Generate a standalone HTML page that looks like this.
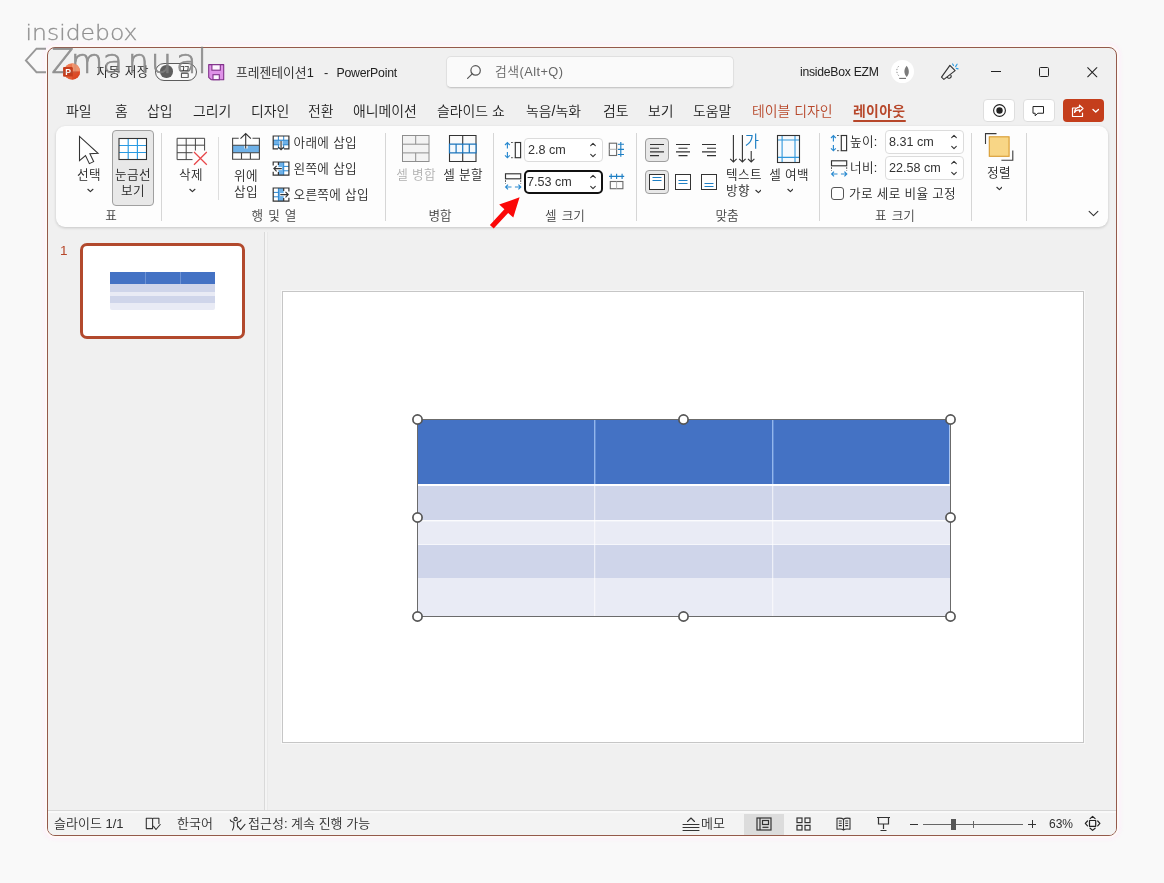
<!DOCTYPE html>
<html lang="ko">
<head>
<meta charset="utf-8">
<title>PowerPoint</title>
<style>
*{box-sizing:border-box;margin:0;padding:0}
html,body{width:1164px;height:883px;overflow:hidden;background:#f9f9f9}
body{position:relative;font-family:"Liberation Sans","Noto Sans CJK KR",sans-serif;font-size:12.5px;font-weight:350;color:#222}
.abs,.t,svg.i{position:absolute}
.t{white-space:nowrap;line-height:16px;height:16px}
.c{text-align:center}
#win{position:absolute;left:47px;top:47px;width:1070px;height:789px;background:#f0f0f0;border:1px solid #94594b;border-radius:8px;overflow:hidden;box-shadow:0 0 0 2px rgba(254,249,246,.9),0 0 3px 4px rgba(253,240,250,.85)}
/* everything inside #stage uses page coordinates */
#stage{position:absolute;left:-48px;top:-48px;width:1164px;height:883px;will-change:transform}
#wm{position:absolute;left:0;top:0;width:300px;height:110px;z-index:5;pointer-events:none}
.tab{position:absolute;top:103px;line-height:16px;height:16px;white-space:nowrap;font-size:13.9px;font-weight:350;color:#222}
#ribbon{position:absolute;left:56px;top:126px;width:1052px;height:101px;background:#fdfdfd;border-radius:9px;box-shadow:0 1px 3px rgba(0,0,0,.18)}
.gsep{position:absolute;top:133px;width:1px;height:88px;background:#d6d6d6}
.glab{position:absolute;top:208px;line-height:16px;height:16px;font-size:12.6px;color:#444;white-space:nowrap;word-spacing:1.500px;transform:translateX(-50%)}
.rl{position:absolute;line-height:16px;height:16px;font-size:12.6px;letter-spacing:.35px;color:#262626;white-space:nowrap}
.rc{transform:translateX(-50%)}
.spin{position:absolute;height:21px;background:#fff;border:1px solid #dcdcdc;border-radius:4px}
.spin span{position:absolute;left:3px;top:2px;line-height:16px;font-size:12.6px;color:#333;white-space:nowrap}
#status{position:absolute;left:48px;top:810px;width:1068px;height:26px;background:#f3f3f3;border-top:1px solid #d7d7d7;box-shadow:inset 0 2px 0 #f9f9f9}
.st{position:absolute;top:816px;line-height:16px;height:16px;font-size:13px;color:#2e2e2e;white-space:nowrap}
</style>
</head>
<body>
<div id="win"><div id="stage">

<!-- TITLE BAR -->
<svg class="i" style="left:62.300px;top:62.400px" width="19" height="19" viewBox="0 0 19 19">
  <defs><linearGradient id="pg" x1="0" y1="0" x2="1" y2="1"><stop offset="0" stop-color="#f58d62"/><stop offset="1" stop-color="#d8431f"/></linearGradient></defs>
  <circle cx="10" cy="9.5" r="8" fill="url(#pg)"/>
  <path d="M10 1.5a8 8 0 0 1 8 8h-8z" fill="#f4a27c" opacity=".75"/>
  <path d="M10 9.5h8a8 8 0 0 1-8 8z" fill="#d9421f" opacity=".55"/>
  <rect x="1.2" y="5" width="9.6" height="9.6" rx="1.2" fill="#c53d1c"/>
  <text x="6" y="13" font-family="Liberation Sans,sans-serif" font-weight="700" font-size="8.6" fill="#fff" text-anchor="middle">P</text>
</svg>
<div class="t" style="left:96.500px;top:64px;font-size:12.800px;letter-spacing:.35px;color:#222">자동 저장</div>
<div class="abs" style="left:155px;top:62.500px;width:42px;height:18.500px;border:1px solid #5c5c5c;border-radius:10px;background:#f7f7f7"></div>
<div class="abs" style="left:160.300px;top:65.300px;width:12.500px;height:12.500px;border-radius:50%;background:#5e5e5e"></div>
<div class="t" style="left:179px;top:64px;font-size:12.6px;color:#333">끔</div>
<svg class="i" style="left:208px;top:64px" width="17" height="17" viewBox="0 0 17 17"><path d="M.700.600h15v15.100H3.100L.700 13.300z" fill="#df92e8" stroke="#80308a" stroke-width="1.100" stroke-linejoin="round"/><rect x="3.900" y=".700" width="8.400" height="5.500" fill="#fdf4ff" stroke="#80308a" stroke-width="1.100"/><rect x="5" y="10.700" width="6.300" height="5" fill="#fdf4ff" stroke="#80308a" stroke-width="1.100"/></svg>
<div class="t" style="left:236px;top:64.600px;font-size:12.800px;color:#222">프레젠테이션1</div><div class="t" style="left:324px;top:64.600px;font-size:12.800px;color:#222">-</div><div class="t" style="left:336.500px;top:64.600px;font-size:12.300px;letter-spacing:-.25px;color:#222">PowerPoint</div>

<div class="abs" style="left:446px;top:56px;width:288px;height:32px;background:#fafafa;border:1px solid #e0e0e0;border-bottom-color:#c9c9c9;border-radius:5px;box-shadow:0 1px 1px rgba(0,0,0,.06)"></div>
<svg class="i" style="left:466px;top:64px" width="16" height="16" viewBox="0 0 16 16" fill="none" stroke="#555" stroke-width="1.2" stroke-linecap="round">
  <circle cx="9.6" cy="6.4" r="4.7"/><path d="M6.2 9.8L1.6 14.4"/>
</svg>
<div class="t" style="left:495px;top:64px;font-size:12.800px;letter-spacing:.45px;color:#666">검색(Alt+Q)</div>

<div class="t" style="left:800px;top:64px;font-size:12.200px;letter-spacing:-.25px;color:#222">insideBox EZM</div>
<div class="abs" style="left:891px;top:60px;width:23px;height:23px;border-radius:50%;background:#fff"></div>
<svg class="i" style="left:891px;top:60px" width="23" height="23" viewBox="0 0 23 23" fill="none"><path d="M7.600 6.300C5.300 8.300 5 12.800 7.800 15.800" stroke="#8c8c8c" stroke-width="1" stroke-dasharray="1.300 1.700"/><path d="M8.200 18.400h6.800" stroke="#6e6e6e" stroke-width="1.100"/><path d="M15.600 5.800c-1.700 2.300-2.400 4.300-2.200 6.300.2 1.900 1 3.500 2.200 5 1.300-1.600 2.100-3.300 2.200-5.200.1-2-.700-4-2.200-6.100z" fill="#7a7a7a"/></svg>
<svg class="i" style="left:938px;top:60px" width="22" height="22" viewBox="0 0 22 22" fill="none" stroke-linecap="round" stroke-linejoin="round"><path d="M11.900 5.400l5.200 5.200-11.200 8.800-2.400-2.200z" stroke="#333" stroke-width="1.150"/><path d="M9.300 17.200a2 2 0 0 0 3.600-1.900" stroke="#333" stroke-width="1.100"/><path d="M14.600 3.900l.9 1.600M17.600 6.600l1.500-2.400M18.300 8.400l1.800.5" stroke="#2b9be0" stroke-width="1.100"/></svg>
<div class="abs" style="left:991px;top:71px;width:10px;height:1px;background:#222"></div>
<div class="abs" style="left:1039px;top:67px;width:10px;height:10px;border:1.2px solid #222;border-radius:1.5px"></div>
<svg class="i" style="left:1087px;top:67px" width="10.500" height="10.500" viewBox="0 0 12 12" stroke="#222" stroke-width="1.200" stroke-linecap="round"><path d="M.8.800l10.400 10.400M11.200.800L.8 11.200"/></svg>


<!-- TABS -->
<div class="tab" style="left:66px">파일</div>
<div class="tab" style="left:115px">홈</div>
<div class="tab" style="left:147px">삽입</div>
<div class="tab" style="left:193px">그리기</div>
<div class="tab" style="left:251px">디자인</div>
<div class="tab" style="left:308px">전환</div>
<div class="tab" style="left:353px">애니메이션</div>
<div class="tab" style="left:437px">슬라이드 쇼</div>
<div class="tab" style="left:526px">녹음/녹화</div>
<div class="tab" style="left:603px">검토</div>
<div class="tab" style="left:648px">보기</div>
<div class="tab" style="left:693px">도움말</div>
<div class="tab" style="left:752px;color:#b7472a">테이블 디자인</div>
<div class="tab" style="left:853px;color:#b7472a;font-weight:700;letter-spacing:.3px">레이아웃</div>
<div class="abs" style="left:853px;top:120.300px;width:52.500px;height:2.200px;background:#b7472a;border-radius:1px"></div>

<div class="abs" style="left:983px;top:99px;width:32px;height:23px;background:#fff;border:1px solid #dedede;border-radius:4px"></div>
<svg class="i" style="left:991px;top:102px" width="17" height="17" viewBox="0 0 17 17"><circle cx="8.500" cy="8.500" r="5.900" fill="none" stroke="#222" stroke-width="1.100"/><circle cx="8.500" cy="8.500" r="3.200" fill="#222"/></svg>
<div class="abs" style="left:1023px;top:99px;width:32px;height:23px;background:#fff;border:1px solid #dedede;border-radius:4px"></div>
<svg class="i" style="left:1030.500px;top:104px" width="14.500" height="14.500" viewBox="0 0 16 16" fill="none" stroke="#222" stroke-width="1.100" stroke-linejoin="round"><path d="M2.200 2.800h11.600v7.400H7.600L4.600 13v-2.800H2.200z"/></svg>
<div class="abs" style="left:1063px;top:99px;width:41px;height:23px;background:#c43e1c;border-radius:4px"></div>
<svg class="i" style="left:1069px;top:102px" width="18" height="18" viewBox="0 0 18 18" fill="none" stroke="#fff" stroke-width="1.200" stroke-linejoin="round" stroke-linecap="round"><path d="M6.500 6H3.500v8.500h10v-3.500"/><path d="M10.500 3.200l3.500 3.300-3.500 3.300v-2c-2.600 0-4.200.900-5 2.700.2-3.200 2-5.200 5-5.400z"/></svg>
<svg class="i" style="left:1091.500px;top:108px" width="7.500" height="5.800" viewBox="0 0 9 7" fill="none" stroke="#fff" stroke-width="1.700" stroke-linecap="round" stroke-linejoin="round"><path d="M1.200 1.800l3.300 3 3.300-3"/></svg>


<!-- RIBBON -->
<div id="ribbon"></div>
<div class="gsep" style="left:161px"></div>
<div class="gsep" style="left:385px"></div>
<div class="gsep" style="left:493px"></div>
<div class="gsep" style="left:636px"></div>
<div class="gsep" style="left:819px"></div>
<div class="gsep" style="left:971px"></div>
<div class="gsep" style="left:1026px"></div>
<div class="abs" style="left:218px;top:137px;width:1px;height:63px;background:#dedede"></div>

<!-- group 표 -->
<svg class="i" style="left:74.600px;top:132.500px" width="30" height="34.300" viewBox="0 0 28 32" fill="#fff" stroke="#333" stroke-width="1" stroke-linejoin="miter"><path d="M4.200 3.200v22.600l5.600-4.800 3.600 7.600 4-1.900-3.500-7.400 7.600-.4z"/></svg>
<div class="rl rc" style="left:89px;top:167px">선택</div>
<svg class="i" style="left:86.800px;top:188.300px" width="6.800" height="5.100" viewBox="0 0 8 6" fill="none" stroke="#333" stroke-width="1.350" stroke-linecap="round" stroke-linejoin="round"><path d="M1 1.500l3 2.800 3-2.800"/></svg>
<div class="abs" style="left:112px;top:130px;width:42px;height:76px;background:#e8e8e8;border:1px solid #a0a0a0;border-radius:4px"></div>
<svg class="i" style="left:118.300px;top:137px" width="30" height="24" viewBox="0 0 30 24" fill="none"><rect x="1" y="1.500" width="27.500" height="21" fill="#fff"/><path d="M10.200 1.500v21M19.400 1.500v21M1 8.500h27.500M1 15.500h27.500" stroke="#2a9be3" stroke-width="1.150"/><rect x="1" y="1.500" width="27.500" height="21" stroke="#333" stroke-width="1.100"/></svg>
<div class="rl rc" style="left:133px;top:167px">눈금선</div>
<div class="rl rc" style="left:133px;top:183px">보기</div>
<div class="glab" style="left:111px">표</div>

<!-- group 행 및 열 -->
<svg class="i" style="left:175px;top:136px" width="34" height="30" viewBox="0 0 34 30" fill="none"><path d="M2.100 2.300h27.500v21.300H2.100zM2.100 9.200h27.500M2.100 16.700h27.500M11.200 2.300v21.300M20.400 2.300v21.300" stroke="#444" stroke-width="1"/><path d="M17.500 14.500h14v12h-14z" fill="#fdfdfd"/><path d="M19 16l12.800 12.800M31.800 16L19 28.800" stroke="#e8474a" stroke-width="1.250"/></svg>
<div class="rl rc" style="left:191px;top:167px">삭제</div>
<svg class="i" style="left:188.800px;top:188.300px" width="6.800" height="5.100" viewBox="0 0 8 6" fill="none" stroke="#333" stroke-width="1.350" stroke-linecap="round" stroke-linejoin="round"><path d="M1 1.500l3 2.800 3-2.800"/></svg>

<svg class="i" style="left:231px;top:131px" width="30" height="30" viewBox="0 0 30 30" fill="none"><rect x="1.600" y="14.200" width="26.800" height="7.600" fill="#6eb1e8"/><path d="M15 17.500V8" stroke="#fff" stroke-width="3.200"/><path d="M7.700 7.300H1.600v21h26.800v-21H21.500M1.600 14.200h26.800M1.600 21.800h26.800M10.500 21.800v6.500M19.400 21.800v6.500" stroke="#444" stroke-width="1.100"/><path d="M14.700 17.500V2.600M9.500 7.600l5.200-5.100 5.200 5.100" stroke="#333" stroke-width="1.100"/></svg>
<div class="rl rc" style="left:246px;top:168px">위에</div>
<div class="rl rc" style="left:246px;top:184px">삽입</div>

<svg class="i" style="left:272px;top:134.500px" width="18" height="16" viewBox="0 0 18 16" fill="none"><rect x="1.200" y="1" width="15.700" height="12.800" fill="#fff"/><rect x="1.200" y="5.200" width="15.700" height="4.600" fill="#6eb1e8"/><path d="M6.400 1v4.200M11.700 1v4.200M6.400 9.800v4M11.700 9.800v4M1.200 5.200h15.700M1.200 9.800h15.700" stroke="#2a86cf" stroke-width="1"/><path d="M6 13.800H1.200V1h15.700v12.800H12" stroke="#333" stroke-width="1.200"/><path d="M9.050 6v7" stroke="#fff" stroke-width="3"/><path d="M9.050 6v8.600M6.300 12l2.750 2.800 2.750-2.800" stroke="#333" stroke-width="1.150"/></svg>
<div class="rl" style="left:293.500px;top:134.500px">아래에 삽입</div>
<svg class="i" style="left:272px;top:160.500px" width="18" height="16" viewBox="0 0 18 16" fill="none"><rect x="1.200" y="1" width="15.700" height="13.200" fill="#fff"/><rect x="6.400" y="1" width="5.300" height="13.200" fill="#6eb1e8"/><path d="M11.700 1v13.200M11.700 5.400h5.200M11.700 9.800h5.200" stroke="#2a86cf" stroke-width="1"/><path d="M1.200 4.500V1h15.700v13.200H1.200v-3.500M6.400 1v3M6.400 11v3.200" stroke="#333" stroke-width="1.200"/><path d="M10 7.600H5" stroke="#fff" stroke-width="3"/><path d="M9.800 7.600H2M4.600 4.900L1.900 7.600l2.700 2.700" stroke="#333" stroke-width="1.150"/></svg>
<div class="rl" style="left:293.500px;top:160.500px">왼쪽에 삽입</div>
<svg class="i" style="left:272px;top:186.500px" width="18" height="16" viewBox="0 0 18 16" fill="none"><rect x="1.200" y="1" width="15.700" height="13.200" fill="#fff"/><rect x="6.400" y="1" width="5.300" height="13.200" fill="#6eb1e8"/><path d="M6.400 1v13.200M1.200 5.400h5.200M1.200 9.800h5.200" stroke="#2a86cf" stroke-width="1"/><path d="M16.900 4.500V1H1.200v13.200h15.700v-3.500M11.700 1v3M11.700 11v3.200" stroke="#333" stroke-width="1.200"/><path d="M8 7.600h5" stroke="#fff" stroke-width="3"/><path d="M8.300 7.600h7.800M13.500 4.900l2.700 2.700-2.700 2.700" stroke="#333" stroke-width="1.150"/></svg>
<div class="rl" style="left:293.500px;top:186.500px">오른쪽에 삽입</div>
<div class="glab" style="left:274px">행 및 열</div>

<!-- group 병합 -->
<svg class="i" style="left:401px;top:134px" width="30" height="29" viewBox="0 0 30 29" fill="none" stroke="#8e8e8e" stroke-width="1"><rect x="1.500" y="1.500" width="26.500" height="26" fill="#f3f3f3"/><path d="M1.500 10.200h26.500M1.500 18.900h26.500M14.700 1.500v8.700M14.700 18.900v8.600"/></svg>
<div class="rl rc" style="left:416px;top:167px;color:#b0b0b0">셀 병합</div>
<svg class="i" style="left:447.700px;top:134px" width="30" height="29" viewBox="0 0 30 29" fill="none"><rect x="1.500" y="1.500" width="26.500" height="26" fill="#fafafa"/><path d="M1.500 1.500h26.500v26H1.500zM14.700 1.500v8.700M14.700 18.900v8.600" stroke="#333" stroke-width="1.100"/><path d="M1.500 10.200h26.500v8.700H1.500zM8.100 10.200v8.700M14.700 10.200v8.700M21.300 10.200v8.700" fill="#f4f9fd" stroke="#1b74bb" stroke-width="1.200"/></svg>
<div class="rl rc" style="left:463px;top:167px">셀 분할</div>
<div class="glab" style="left:440px">병합</div>

<!-- group 셀 크기 -->
<svg class="i" style="left:503px;top:140px" width="20" height="20" viewBox="0 0 20 20" fill="none"><path d="M4.400 2.700v5.800M4.400 11.900v5.800M2 5L4.400 2.600 6.800 5M2 15.400l2.400 2.400 2.400-2.400" stroke="#2a8ad0" stroke-width="1.150"/><path d="M8.200 2.500h3M8.200 17.700h3" stroke="#333" stroke-width="1" stroke-dasharray="1.500 1.200"/><rect x="12.300" y="2.500" width="5.300" height="15.200" stroke="#333" stroke-width="1.150"/></svg>
<div class="spin" style="left:524px;top:138px;width:79px;height:24px"><span style="top:3px">2.8 cm</span></div>
<svg class="i" style="left:589px;top:142px" width="8" height="16" viewBox="0 0 8 16" fill="none" stroke="#333" stroke-width="1.100" stroke-linecap="round" stroke-linejoin="round"><path d="M1.700 3.700L4 1.400l2.300 2.300M1.700 12.300L4 14.600l2.300-2.300"/></svg>
<svg class="i" style="left:608px;top:141px" width="18" height="17" viewBox="0 0 18 17" fill="none"><rect x="1.300" y="2.200" width="7.300" height="12.300" stroke="#6a6a6a" stroke-width="1.100"/><path d="M1.300 8.300h7.300" stroke="#b0b0b0" stroke-width="1"/><path d="M12.800 1v14.800M9.800 3.200h6.200M9.800 8.300h6.200M9.800 13.500h6.200" stroke="#1e7fc4" stroke-width="1.150"/></svg>

<svg class="i" style="left:503px;top:172px" width="20" height="20" viewBox="0 0 20 20" fill="none"><rect x="2.500" y="1.800" width="15.200" height="5" stroke="#333" stroke-width="1.150"/><path d="M2.500 8.300v3.200M17.700 8.300v3.200" stroke="#333" stroke-width="1" stroke-dasharray="1.500 1.200"/><path d="M2.700 15h5.800M11.900 15h5.800M5 12.600L2.600 15 5 17.400M15.400 12.600l2.400 2.400-2.400 2.400" stroke="#2a8ad0" stroke-width="1.150"/></svg>
<div class="abs" style="left:524px;top:170px;width:79px;height:24px;background:#fff;border:2px solid #111;border-radius:5px"></div>
<div class="rl" style="left:527px;top:174px;color:#333;letter-spacing:0">7.53 cm</div>
<svg class="i" style="left:589px;top:174px" width="8" height="16" viewBox="0 0 8 16" fill="none" stroke="#333" stroke-width="1.100" stroke-linecap="round" stroke-linejoin="round"><path d="M1.700 3.700L4 1.400l2.300 2.300M1.700 12.300L4 14.600l2.300-2.300"/></svg>
<svg class="i" style="left:608px;top:172px" width="18" height="18" viewBox="0 0 18 18" fill="none"><rect x="2.300" y="9.500" width="12.600" height="7.200" stroke="#6a6a6a" stroke-width="1.100"/><path d="M8.600 9.500v7.200" stroke="#b0b0b0" stroke-width="1"/><path d="M1 4.400h15.200M3.200 1.800v5.300M8.600 1.800v5.300M14.100 1.800v5.300" stroke="#1e7fc4" stroke-width="1.150"/></svg>
<div class="glab" style="left:565px">셀 크기</div>

<!-- red arrow -->
<svg class="i" style="left:486px;top:193px;z-index:3" width="40" height="38" viewBox="0 0 40 38"><path d="M3.900 32L18.400 16.300 13.200 11.600 33.600 4.200 27.300 24.600 22.100 19.900 7.700 35.500z" fill="#fb0808"/></svg>

<!-- group 맞춤 -->
<div class="abs" style="left:645px;top:138px;width:24px;height:24px;background:#e8e8e8;border:1px solid #9e9e9e;border-radius:4px"></div>
<svg class="i" style="left:649px;top:143px" width="16" height="14" viewBox="0 0 16 14" stroke="#333" stroke-width="1.100"><path d="M1 1.500h14M1 5.200h9M1 8.900h14M1 12.600h9"/></svg>
<svg class="i" style="left:675px;top:143px" width="16" height="14" viewBox="0 0 16 14" stroke="#333" stroke-width="1.100"><path d="M1 1.500h14M3.500 5.200h9M1 8.900h14M3.500 12.600h9"/></svg>
<svg class="i" style="left:701px;top:143px" width="16" height="14" viewBox="0 0 16 14" stroke="#333" stroke-width="1.100"><path d="M1 1.500h14M6 5.200h9M1 8.900h14M6 12.600h9"/></svg>
<div class="abs" style="left:645px;top:170px;width:24px;height:24px;background:#e8e8e8;border:1px solid #9e9e9e;border-radius:4px"></div>
<svg class="i" style="left:649px;top:174px" width="16" height="16" viewBox="0 0 16 16" fill="none"><rect x=".500" y=".500" width="15" height="15" fill="#fff" stroke="#333" stroke-width="1"/><path d="M3.500 3.5h9M3.500 6.5h9" stroke="#1e7fc4" stroke-width="1.100"/></svg>
<svg class="i" style="left:675px;top:174px" width="16" height="16" viewBox="0 0 16 16" fill="none"><rect x=".500" y=".500" width="15" height="15" fill="#fff" stroke="#333" stroke-width="1"/><path d="M3.500 6.5h9M3.500 9.5h9" stroke="#1e7fc4" stroke-width="1.100"/></svg>
<svg class="i" style="left:701px;top:174px" width="16" height="16" viewBox="0 0 16 16" fill="none"><rect x=".500" y=".500" width="15" height="15" fill="#fff" stroke="#333" stroke-width="1"/><path d="M3.500 9.5h9M3.500 12.5h9" stroke="#1e7fc4" stroke-width="1.100"/></svg>

<svg class="i" style="left:728px;top:133px" width="34" height="32" viewBox="0 0 34 32" fill="none"><path d="M5.400 2v27M2.200 25.800l3.200 3.200 3.200-3.200M14.400 2v27M11.200 25.800l3.200 3.200 3.200-3.200M23.200 18v11M20 25.800l3.200 3.200 3.200-3.200" stroke="#333" stroke-width="1.100"/><text x="24" y="14" font-family="Liberation Sans,Noto Sans CJK KR,sans-serif" font-size="15.500" fill="#1e7fc4" text-anchor="middle">가</text></svg>
<div class="rl rc" style="left:744px;top:167px">텍스트</div>
<div class="rl" style="left:726px;top:183px">방향</div>
<svg class="i" style="left:754.500px;top:188.500px" width="6.800" height="5.100" viewBox="0 0 8 6" fill="none" stroke="#333" stroke-width="1.350" stroke-linecap="round" stroke-linejoin="round"><path d="M1 1.500l3 2.800 3-2.800"/></svg>
<svg class="i" style="left:776px;top:134px" width="26" height="30" viewBox="0 0 26 30" fill="none"><rect x="1.500" y="1.500" width="22" height="27" fill="#f6fafd"/><path d="M6.100 1.500v27M19 1.500v27M1.500 6h22M1.500 23.400h22" stroke="#2f97dc" stroke-width="1.100"/><rect x="1.500" y="1.500" width="22" height="27" stroke="#333" stroke-width="1.100"/></svg>
<div class="rl rc" style="left:789px;top:167px">셀 여백</div>
<svg class="i" style="left:786.600px;top:188.300px" width="6.800" height="5.100" viewBox="0 0 8 6" fill="none" stroke="#333" stroke-width="1.350" stroke-linecap="round" stroke-linejoin="round"><path d="M1 1.500l3 2.800 3-2.800"/></svg>
<div class="glab" style="left:727px">맞춤</div>

<!-- group 표 크기 -->
<svg class="i" style="left:829px;top:132.5px" width="20" height="20" viewBox="0 0 20 20" fill="none"><path d="M4.400 2.700v5.800M4.400 11.900v5.800M2 5L4.400 2.600 6.800 5M2 15.400l2.400 2.400 2.400-2.400" stroke="#2a8ad0" stroke-width="1.150"/><path d="M8.200 2.500h3M8.200 17.700h3" stroke="#333" stroke-width="1" stroke-dasharray="1.500 1.200"/><rect x="12.300" y="2.500" width="5.300" height="15.200" stroke="#333" stroke-width="1.150"/></svg>
<div class="rl" style="left:850px;top:134px">높이:</div>
<div class="spin" style="left:885px;top:130px;width:79px;height:24px"><span style="top:3px">8.31 cm</span></div>
<svg class="i" style="left:950px;top:134px" width="8" height="16" viewBox="0 0 8 16" fill="none" stroke="#333" stroke-width="1.100" stroke-linecap="round" stroke-linejoin="round"><path d="M1.700 3.700L4 1.400l2.300 2.300M1.700 12.300L4 14.600l2.300-2.300"/></svg>
<svg class="i" style="left:829.300px;top:158.700px" width="20" height="20" viewBox="0 0 20 20" fill="none"><rect x="2.500" y="1.800" width="15.200" height="5" stroke="#333" stroke-width="1.150"/><path d="M2.500 8.300v3.200M17.700 8.300v3.200" stroke="#333" stroke-width="1" stroke-dasharray="1.500 1.200"/><path d="M2.700 15h5.800M11.900 15h5.800M5 12.600L2.600 15 5 17.400M15.400 12.600l2.400 2.400-2.400 2.400" stroke="#2a8ad0" stroke-width="1.150"/></svg>
<div class="rl" style="left:850px;top:160px">너비:</div>
<div class="spin" style="left:885px;top:156px;width:79px;height:24px"><span style="top:3px">22.58 cm</span></div>
<svg class="i" style="left:950px;top:160px" width="8" height="16" viewBox="0 0 8 16" fill="none" stroke="#333" stroke-width="1.100" stroke-linecap="round" stroke-linejoin="round"><path d="M1.700 3.700L4 1.400l2.300 2.300M1.700 12.300L4 14.600l2.300-2.300"/></svg>
<div class="abs" style="left:831px;top:187px;width:13px;height:13px;background:#fff;border:1px solid #555;border-radius:3px"></div>
<div class="rl" style="left:849px;top:186px">가로 세로 비율 고정</div>
<div class="glab" style="left:895px">표 크기</div>

<!-- group 정렬 -->
<svg class="i" style="left:984px;top:132px" width="31" height="30" viewBox="0 0 31 30" fill="none"><path d="M1.500 12V1.600h11M28.800 18.400v9.900H17.400" stroke="#3a3a3a" stroke-width="1.100"/><rect x="5.300" y="4.800" width="19.800" height="19.500" fill="#f8d686" stroke="#d89a2e" stroke-width="1.100"/></svg>
<div class="rl rc" style="left:999px;top:165px">정렬</div>
<svg class="i" style="left:995.600px;top:186.300px" width="6.800" height="5.100" viewBox="0 0 8 6" fill="none" stroke="#333" stroke-width="1.350" stroke-linecap="round" stroke-linejoin="round"><path d="M1 1.500l3 2.800 3-2.800"/></svg>
<svg class="i" style="left:1088px;top:210.300px" width="11" height="7.300" viewBox="0 0 12 8" fill="none" stroke="#333" stroke-width="1.200" stroke-linecap="round" stroke-linejoin="round"><path d="M1.200 1.500L6 6.200l4.800-4.700"/></svg>


<!-- LEFT PANEL -->
<div class="abs" style="left:264px;top:232px;width:1px;height:578px;background:#d9d9d9"></div>
<div class="abs" style="left:265px;top:232px;width:2px;height:578px;background:#f4f4f4"></div>
<div class="abs" style="left:267px;top:232px;width:1px;height:578px;background:#e9e9e9"></div>
<div class="t" style="left:60px;top:243px;font-size:13.500px;color:#b7472a">1</div>
<div class="abs" style="left:80px;top:243px;width:165px;height:96px;background:#fff;border:3px solid #b2492d;border-radius:7px"></div>
<div class="abs" style="left:110px;top:272px;width:105px;height:12px;background:#4472c4"></div>
<div class="abs" style="left:145px;top:272px;width:1px;height:12px;background:#6d92d4"></div>
<div class="abs" style="left:180px;top:272px;width:1px;height:12px;background:#6d92d4"></div>
<div class="abs" style="left:110px;top:284px;width:105px;height:8px;background:#cfd5ea"></div>
<div class="abs" style="left:110px;top:292px;width:105px;height:4px;background:#e9ebf5"></div>
<div class="abs" style="left:110px;top:296px;width:105px;height:7px;background:#cfd5ea"></div>
<div class="abs" style="left:110px;top:303px;width:105px;height:7px;background:#e9ebf5;border-radius:0 0 2px 2px"></div>


<!-- SLIDE -->
<div class="abs" style="left:282px;top:291px;width:802px;height:452px;background:#fff;border:1px solid #c6c6c6;box-shadow:0 0 0 1px rgba(255,255,255,.55)"></div>
<div class="abs" style="left:417px;top:419px;width:534px;height:66px;background:#4472c4"></div>
<div class="abs" style="left:417px;top:485px;width:534px;height:36px;background:#cfd5ea"></div>
<div class="abs" style="left:417px;top:521px;width:534px;height:24px;background:#e9ebf5"></div>
<div class="abs" style="left:417px;top:545px;width:534px;height:33px;background:#cfd5ea"></div>
<div class="abs" style="left:417px;top:578px;width:534px;height:38px;background:#e9ebf5"></div>
<div class="abs" style="left:417px;top:484px;width:534px;height:2px;background:#fff"></div>
<div class="abs" style="left:417px;top:520px;width:534px;height:1px;background:rgba(255,255,255,.9)"></div><div class="abs" style="left:417px;top:521px;width:534px;height:1px;background:rgba(255,255,255,.35)"></div><div class="abs" style="left:417px;top:544px;width:534px;height:1px;background:rgba(255,255,255,.55)"></div>
<div class="abs" style="left:594px;top:419px;width:1px;height:65px;background:#93b6ec"></div><div class="abs" style="left:595px;top:419px;width:1px;height:65px;background:rgba(160,195,245,.35)"></div>
<div class="abs" style="left:772px;top:419px;width:1px;height:65px;background:#93b6ec"></div><div class="abs" style="left:773px;top:419px;width:1px;height:65px;background:rgba(160,195,245,.35)"></div>
<div class="abs" style="left:594px;top:486px;width:1px;height:130px;background:rgba(255,255,255,.62)"></div><div class="abs" style="left:595px;top:486px;width:1px;height:130px;background:rgba(255,255,255,.18)"></div>
<div class="abs" style="left:772px;top:486px;width:1px;height:130px;background:rgba(255,255,255,.62)"></div><div class="abs" style="left:773px;top:486px;width:1px;height:130px;background:rgba(255,255,255,.18)"></div>
<div class="abs" style="left:949px;top:420px;width:1px;height:64px;background:#a9c4f0"></div><div class="abs" style="left:417px;top:419px;width:534px;height:198px;border:1px solid #6b6b6b"></div>
<svg class="i" style="left:407px;top:409px" width="554" height="218" viewBox="0 0 554 218" fill="#fff" stroke="#555" stroke-width="1.700">
<circle cx="10.500" cy="10.500" r="4.600"/><circle cx="276.500" cy="10.500" r="4.600"/><circle cx="543.500" cy="10.500" r="4.600"/>
<circle cx="10.500" cy="108.500" r="4.600"/><circle cx="543.500" cy="108.500" r="4.600"/>
<circle cx="10.500" cy="207.500" r="4.600"/><circle cx="276.500" cy="207.500" r="4.600"/><circle cx="543.500" cy="207.500" r="4.600"/>
</svg>


<!-- STATUS -->
<div id="status"></div>
<div class="st" style="left:54px">슬라이드 1/1</div>
<svg class="i" style="left:145px;top:816px" width="16" height="16" viewBox="0 0 16 16" fill="none" stroke="#333" stroke-width="1.100" stroke-linejoin="round" stroke-linecap="round"><path d="M7.600 3v9.600M7.600 3c0-.500-.400-.800-.900-.800H1.300v10.400h6.300M7.600 3c0-.500.400-.800.900-.800h5.400v5.300"/><path d="M8.600 10.300l2.400 3.200 4.200-5"/></svg>
<div class="st" style="left:177px">한국어</div>
<svg class="i" style="left:228px;top:815px" width="18" height="18" viewBox="0 0 18 18" fill="none" stroke="#333" stroke-width="1.100" stroke-linejoin="round" stroke-linecap="round"><circle cx="7.600" cy="4.100" r="1.700"/><path d="M2.200 4.800c.2 1.600 1.700 2.300 3.600 2.400v3.300c0 1.500-.500 3-1.300 4.500M13 4.800c-.200 1.600-1.700 2.300-3.600 2.400v2.600c0 .8.200 1.500.5 2.100"/><path d="M10.200 11.600l2.400 3 4.400-5.200"/></svg>
<div class="st" style="left:248px">접근성: 계속 진행 가능</div>

<svg class="i" style="left:682px;top:815px" width="18" height="18" viewBox="0 0 18 18" fill="none" stroke="#333" stroke-width="1.100" stroke-linecap="round" stroke-linejoin="round"><path d="M1 15.500h16M1 12.500h16M1 9.500h16M5.500 6.500L9 3l3.500 3.500"/></svg>
<div class="st" style="left:701px">메모</div>
<div class="abs" style="left:744px;top:814px;width:40px;height:21px;background:#dcdcdc"></div>
<svg class="i" style="left:756px;top:817px" width="16" height="14" viewBox="0 0 16 14" fill="none" stroke="#333" stroke-width="1.200"><rect x="1" y="1" width="14" height="12"/><path d="M4 1v12"/><rect x="6.500" y="3.500" width="6" height="4"/><path d="M6.500 10.300h6"/></svg>
<svg class="i" style="left:796px;top:817px" width="15" height="14" viewBox="0 0 15 14" fill="none" stroke="#333" stroke-width="1.200"><rect x="1" y="1" width="5" height="4.600"/><rect x="9" y="1" width="5" height="4.600"/><rect x="1" y="8.400" width="5" height="4.600"/><rect x="9" y="8.400" width="5" height="4.600"/></svg>
<svg class="i" style="left:836px;top:817px" width="15" height="14" viewBox="0 0 15 14" fill="none" stroke="#333" stroke-width="1.100"><path d="M7.500 2.200C6 1 3.500 1 1 1.400v10.800c2.500-.4 5-.400 6.500.8 1.500-1.200 4-1.200 6.500-.8V1.400C11.500 1 9 1 7.500 2.200zM7.500 2.200V13M2.800 4h3M2.800 6.300h3M2.800 8.600h3M9.200 4h3M9.200 6.300h3M9.200 8.600h3"/></svg>
<svg class="i" style="left:876px;top:816px" width="15" height="16" viewBox="0 0 15 16" fill="none" stroke="#333" stroke-width="1.200"><path d="M1 1.500h13M2.500 1.500v6.500h10V1.500M7.500 8v5M4.500 14.500h6" /></svg>
<div class="abs" style="left:910px;top:824px;width:8px;height:1px;background:#333"></div>
<div class="abs" style="left:923px;top:824px;width:100px;height:1px;background:#666"></div>
<div class="abs" style="left:973px;top:821px;width:1px;height:7px;background:#666"></div>
<div class="abs" style="left:951px;top:819px;width:5px;height:11px;background:#555"></div>
<div class="abs" style="left:1028px;top:824px;width:8px;height:1px;background:#333"></div>
<div class="abs" style="left:1032px;top:820px;width:1px;height:8px;background:#333"></div>
<div class="st" style="left:1049px;font-size:12px">63%</div>
<svg class="i" style="left:1084px;top:815px" width="18" height="17" viewBox="0 0 18 17" fill="none" stroke="#222" stroke-width="1.200" stroke-linecap="round" stroke-linejoin="round"><rect x="5.500" y="5.500" width="6.200" height="5.800"/><path d="M3.500 6L1.300 8.400l2.200 2.400M13.700 6l2.200 2.400-2.200 2.400M6.100 3.600l2.500-2.200 2.500 2.200M6.100 13.200l2.500 2.200 2.500-2.200"/></svg>


</div></div>

<!-- WATERMARK -->
<svg id="wm" width="300" height="110" viewBox="0 0 300 110">
<g fill="#808080" fill-opacity=".8" stroke="#808080" stroke-opacity=".8">
<text x="25.500" y="39.700" font-family="DejaVu Sans Light,DejaVu Sans,sans-serif" font-weight="200" font-size="20.500" stroke-width=".3" textLength="112" lengthAdjust="spacingAndGlyphs">insidebox</text>
<text x="51.200 70.700 102.500 127.700 150.700 176 197.600" y="72.800" font-family="DejaVu Sans Light,DejaVu Sans,sans-serif" font-weight="200" font-size="33.500" stroke-width=".7">Zmanual</text>
</g>
<path d="M46 48.700H36.500L25.900 60.400 36.500 72.200H46" fill="none" stroke="#808080" stroke-opacity=".8" stroke-width="1.900"/>
</svg>


<svg class="i" style="left:62.300px;top:62.400px;z-index:6;opacity:.8" width="19" height="19" viewBox="0 0 19 19">
  
  <circle cx="10" cy="9.5" r="8" fill="url(#pg)"/>
  <path d="M10 1.5a8 8 0 0 1 8 8h-8z" fill="#f4a27c" opacity=".75"/>
  <path d="M10 9.5h8a8 8 0 0 1-8 8z" fill="#d9421f" opacity=".55"/>
  <rect x="1.2" y="5" width="9.6" height="9.6" rx="1.2" fill="#c53d1c"/>
  <text x="6" y="13" font-family="Liberation Sans,sans-serif" font-weight="700" font-size="8.6" fill="#fff" text-anchor="middle">P</text>
</svg>
</body>
</html>
